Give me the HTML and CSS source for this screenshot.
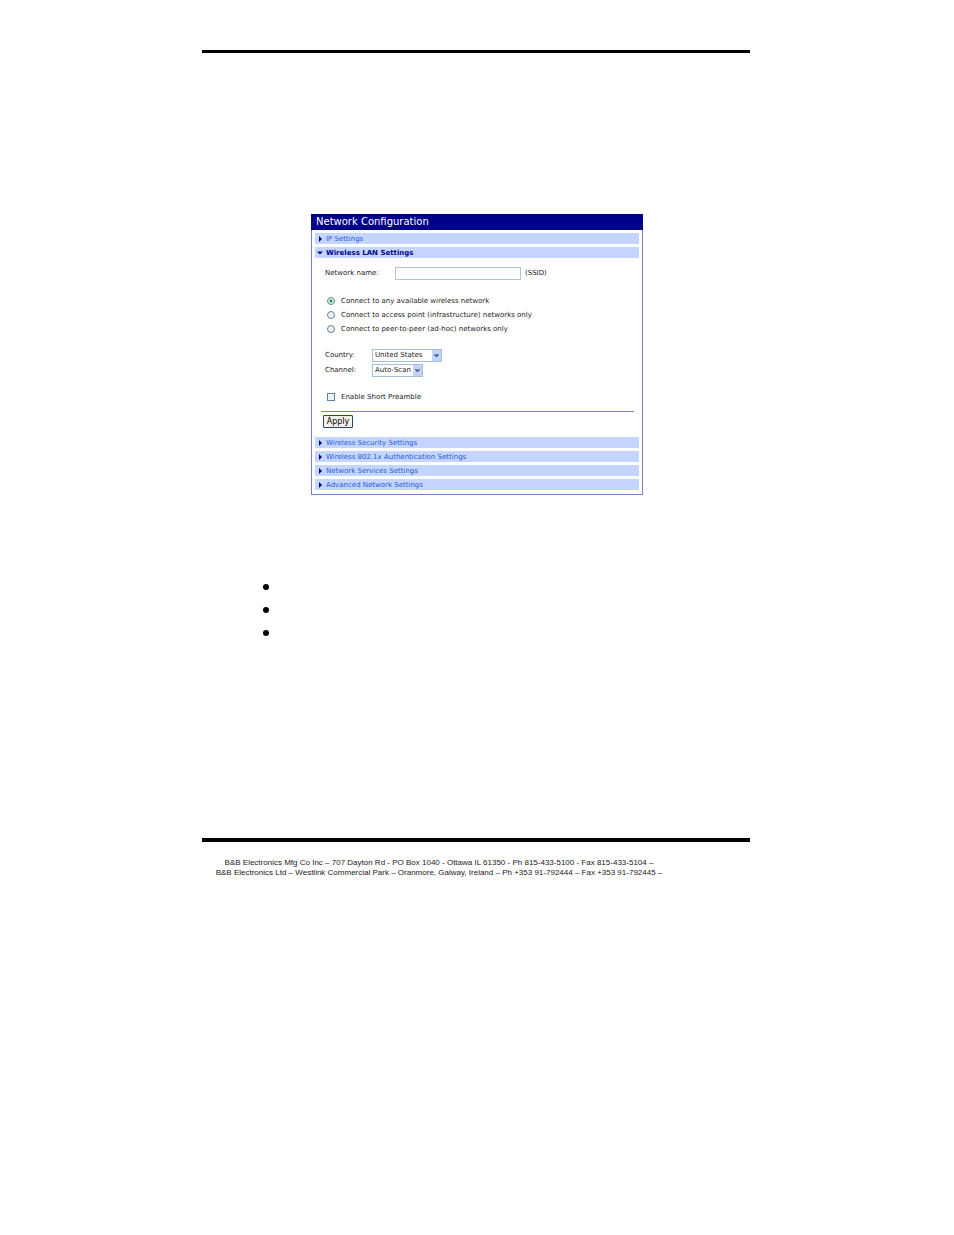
FILE: index.html
```html
<!DOCTYPE html>
<html lang="en">
<head>
<meta charset="utf-8">
<title>Network Configuration</title>
<link rel="stylesheet" href="styles.css">
</head>
<body>
<div class="page">
  <main class="sheet">
    <form class="panel">
      <h1 class="panel-title">Network Configuration</h1>
      <div class="sections">
        <a class="bar" href="#ip"><svg class="tri" viewBox="0 0 6 6"><path d="M2 0L5 3L2 6Z"/></svg>IP Settings</a>
        <a class="bar open" href="#wlan"><svg class="tri" viewBox="0 0 6 6"><path d="M0 1.5H6L3 4.5Z"/></svg>Wireless LAN Settings</a>
        <div class="body" id="wlan">
          <div class="name-row">
            <label for="ssid">Network name:</label>
            <input class="text" id="ssid" type="text">
            <span>(SSID)</span>
          </div>
          <div class="radios">
            <label class="choice"><input class="radio" type="radio" name="mode" checked>Connect to any available wireless network</label>
            <label class="choice"><input class="radio" type="radio" name="mode">Connect to access point (infrastructure) networks only</label>
            <label class="choice"><input class="radio" type="radio" name="mode">Connect to peer-to-peer (ad-hoc) networks only</label>
          </div>
          <div class="selects">
            <label for="country">Country:</label>
            <span class="combo wide"><select id="country"><option>United States</option></select><svg class="arrow" viewBox="0 0 9 11"><path d="M2.5 4.2L4.5 6.2L6.5 4.2"/></svg></span>
            <label for="channel">Channel:</label>
            <span class="combo"><select id="channel"><option>Auto-Scan</option></select><svg class="arrow" viewBox="0 0 9 11"><path d="M2.5 4.2L4.5 6.2L6.5 4.2"/></svg></span>
          </div>
          <label class="choice"><input class="check" type="checkbox">Enable Short Preamble</label>
          <div class="actions"><button class="apply" type="button">Apply</button></div>
        </div>
        <a class="bar" href="#security"><svg class="tri" viewBox="0 0 6 6"><path d="M2 0L5 3L2 6Z"/></svg>Wireless Security Settings</a>
        <a class="bar" href="#auth"><svg class="tri" viewBox="0 0 6 6"><path d="M2 0L5 3L2 6Z"/></svg>Wireless 802.1x Authentication Settings</a>
        <a class="bar" href="#services"><svg class="tri" viewBox="0 0 6 6"><path d="M2 0L5 3L2 6Z"/></svg>Network Services Settings</a>
        <a class="bar" href="#advanced"><svg class="tri" viewBox="0 0 6 6"><path d="M2 0L5 3L2 6Z"/></svg>Advanced Network Settings</a>
      </div>
    </form>
    <ul class="bullets"><li></li><li></li><li></li></ul>
  </main>
  <footer class="footer">
    <p>B&amp;B Electronics Mfg Co Inc – 707 Dayton Rd - PO Box 1040 - Ottawa IL 61350 - Ph 815-433-5100 - Fax 815-433-5104 –</p>
    <p>B&amp;B Electronics Ltd – Westlink Commercial Park – Oranmore, Galway, Ireland – Ph +353 91-792444 – Fax +353 91-792445 –</p>
  </footer>
</div>
</body>
</html>
```
FILE: styles.css
```css
* { box-sizing: border-box; }
body {
  margin: 0;
  padding: 50px 2px 0 0;
  background: #fff;
  color: #222;
  font-family: "DejaVu Sans", Verdana, sans-serif;
  font-size: 7px;
  line-height: 11px;
}
.page { max-width: 548px; margin: 0 auto; }
.sheet {
  border-top: 3px solid #000;
  border-bottom: 4px solid #000;
  padding: 161px 107px 202px 109px;
}
.panel { border: 1px solid #7c7ccc; border-top: 0; }
.panel-title {
  margin: 0 -1px;
  padding-left: 5px;
  background: #00008b;
  color: #fff;
  font-size: 10px;
  font-weight: 400;
  line-height: 16px;
}
.sections { display: flex; flex-direction: column; gap: 3px; padding: 3px 3px 4px; }
.bar {
  display: flex;
  align-items: center;
  gap: 3px;
  height: 11px;
  padding-left: 2px;
  background: #c4d6ff;
  color: #2858dc;
  line-height: 12px;
  text-decoration: none;
}
.tri { width: 6px; height: 6px; fill: #00008b; }
.open { color: #00008b; font-weight: 700; }
.body { padding: 6px 5px 6px 6px; }
.name-row { display: flex; align-items: center; padding-left: 4px; }
.name-row label { width: 70px; }
.text {
  width: 126px;
  height: 13px;
  margin-right: 4px;
  padding: 0 2px;
  border: 1px solid #b0c4d8;
  font: inherit;
}
.radios { display: grid; gap: 2px; margin: 15px 0 14px; }
.choice { display: flex; align-items: center; gap: 6px; height: 12px; padding-left: 6px; }
.radio, .check {
  appearance: none;
  width: 8px;
  height: 8px;
  margin: 0;
  border: 1px solid #5b83a8;
  background: #f2f2ee;
}
.radio { border-radius: 50%; }
.radio:checked { background: radial-gradient(circle, #22a022 0 1px, #e8f4e4 2px); }
.selects {
  display: grid;
  grid-template-columns: 47px max-content;
  row-gap: 2px;
  align-items: center;
  padding-left: 4px;
}
.combo { position: relative; width: 51px; height: 13px; }
.wide { width: 70px; }
.combo select {
  display: block;
  appearance: none;
  width: 100%;
  height: 100%;
  margin: 0;
  padding: 0 0 0 2px;
  border: 1px solid #a3bfdc;
  border-radius: 0;
  background: #fff;
  color: #222;
  font: inherit;
}
.arrow {
  position: absolute;
  top: 1px;
  right: 1px;
  width: 9px;
  height: 11px;
  background: #c1d2fb;
  fill: none;
  stroke: #3c5478;
  stroke-width: 1.4;
  pointer-events: none;
}
.selects + .choice { margin-top: 14px; }
.actions { margin-top: 8px; padding: 3px 2px 0; border-top: 1px solid #7c7ccc; }
.apply {
  display: block;
  width: 30px;
  height: 13px;
  padding: 0;
  border: 1px solid #254868;
  border-radius: 1px;
  background: #f1f0e9;
  color: #000;
  font: inherit;
  font-size: 8px;
}
.bullets {
  display: grid;
  gap: 17px;
  margin: 89px 0 0 -48px;
  padding: 0;
  list-style: none;
}
.bullets li { width: 6px; height: 6px; border-radius: 50%; background: #000; }
.footer {
  padding: 16px 74px 0 0;
  text-align: center;
  font-family: "Arial Narrow", "Liberation Sans", Arial, sans-serif;
  font-size: 8px;
  line-height: 10px;
}
.footer p { margin: 0; }
```
